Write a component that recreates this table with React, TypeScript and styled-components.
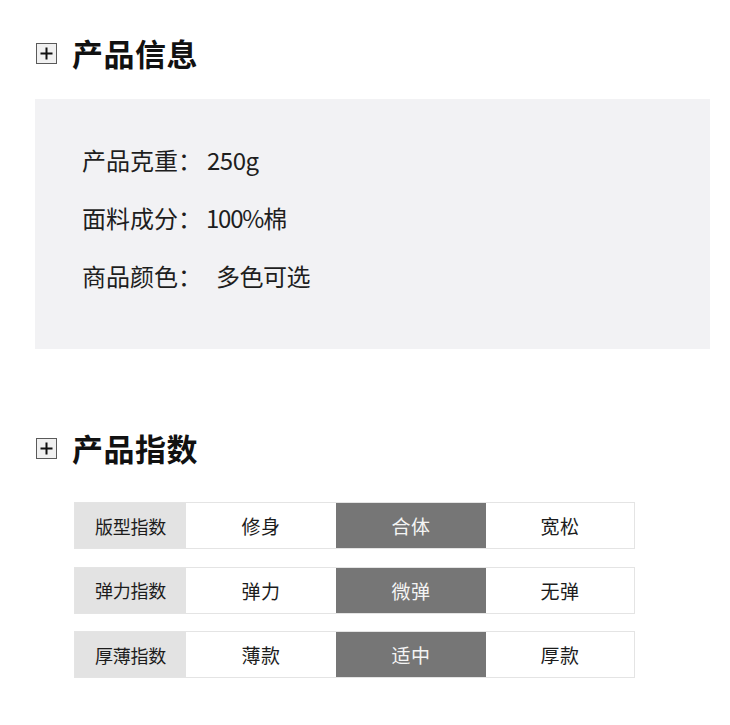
import React from 'react';
import styled, { createGlobalStyle } from 'styled-components';

const GlobalStyle = createGlobalStyle`
  html, body {
    margin: 0;
    padding: 0;
    background: #ffffff;
  }
  body {
    font-family: "Noto Sans CJK SC", "Noto Sans", sans-serif;
    color: #222;
  }
`;

const Page = styled.div`
  width: 730px;
  padding: 33px 20px 40px 35px;
  box-sizing: border-box;
`;

const SectionHeader = styled.div<{ $top: number }>`
  display: flex;
  align-items: center;
  height: 40px;
  margin-top: ${p => p.$top}px;
`;

const PlusBox = styled.span`
  display: flex;
  width: 21px;
  height: 21px;
  margin-left: 1px;
  box-sizing: border-box;
  border: 1px solid #5a5a5a;
  background: #f1f1f1;
  align-items: center;
  justify-content: center;
`;

const Title = styled.h2`
  margin: 0 0 0 15px;
  font-size: 31px;
  font-weight: 700;
  line-height: 40px;
  color: #111;
  letter-spacing: 0.5px;
`;

const InfoPanel = styled.div`
  margin-top: 26px;
  width: 675px;
  background: #f2f2f4;
  padding: 32px 0 44px 47px;
  box-sizing: border-box;
`;

const InfoLine = styled.div`
  height: 58px;
  line-height: 58px;
  font-size: 24px;
  font-weight: 400;
  color: #1e1e1e;
  display: flex;
  align-items: center;
`;

const InfoValue = styled.span<{ $gap: number; $tight: number }>`
  margin-left: ${p => p.$gap}px;
  letter-spacing: ${p => p.$tight}px;
`;

const IndexTable = styled.div`
  margin: 34px 0 0 39px;
  display: flex;
  flex-direction: column;
  gap: 17.5px;
  width: 561px;
`;

const IndexRow = styled.div`
  display: grid;
  grid-template-columns: 111px 150px 150px 1fr;
  height: 47px;
  border: 1px solid #e4e4e4;
  box-sizing: border-box;
`;

const Cell = styled.div<{ $kind: 'label' | 'plain' | 'active' }>`
  display: flex;
  align-items: center;
  justify-content: center;
  font-size: ${p => (p.$kind === 'label' ? '18px' : '19px')};
  letter-spacing: ${p => (p.$kind === 'label' ? '-0.3px' : '0.5px')};
  background: ${p =>
    p.$kind === 'label' ? '#e3e3e3' : p.$kind === 'active' ? '#767676' : '#ffffff'};
  color: ${p => (p.$kind === 'active' ? '#f4f4f4' : '#1c1c1c')};
`;

const PlusIcon = () => (
  <PlusBox>
    <svg width="13" height="13" viewBox="0 0 13 13">
      <rect x="5.5" y="0.5" width="2" height="12" fill="#111" />
      <rect x="0.5" y="5.5" width="12" height="2" fill="#111" />
    </svg>
  </PlusBox>
);

const info = [
  { label: '产品克重：', value: '250g', gap: 5, tight: -0.5 },
  { label: '面料成分：', value: '100%棉', gap: 4, tight: -1.2 },
  { label: '商品颜色：', value: '多色可选', gap: 14, tight: -0.5 },
];

const indexes = [
  { label: '版型指数', options: ['修身', '合体', '宽松'], active: 1 },
  { label: '弹力指数', options: ['弹力', '微弹', '无弹'], active: 1 },
  { label: '厚薄指数', options: ['薄款', '适中', '厚款'], active: 1 },
];

export default function App() {
  return (
    <>
      <GlobalStyle />
      <Page>
        <SectionHeader $top={0}>
          <PlusIcon />
          <Title>产品信息</Title>
        </SectionHeader>

        <InfoPanel>
          {info.map(row => (
            <InfoLine key={row.label}>
              <span>{row.label}</span>
              <InfoValue $gap={row.gap} $tight={row.tight}>
                {row.value}
              </InfoValue>
            </InfoLine>
          ))}
        </InfoPanel>

        <SectionHeader $top={79}>
          <PlusIcon />
          <Title>产品指数</Title>
        </SectionHeader>

        <IndexTable>
          {indexes.map(row => (
            <IndexRow key={row.label}>
              <Cell $kind="label">{row.label}</Cell>
              {row.options.map((opt, i) => (
                <Cell key={opt} $kind={i === row.active ? 'active' : 'plain'}>
                  {opt}
                </Cell>
              ))}
            </IndexRow>
          ))}
        </IndexTable>
      </Page>
    </>
  );
}
